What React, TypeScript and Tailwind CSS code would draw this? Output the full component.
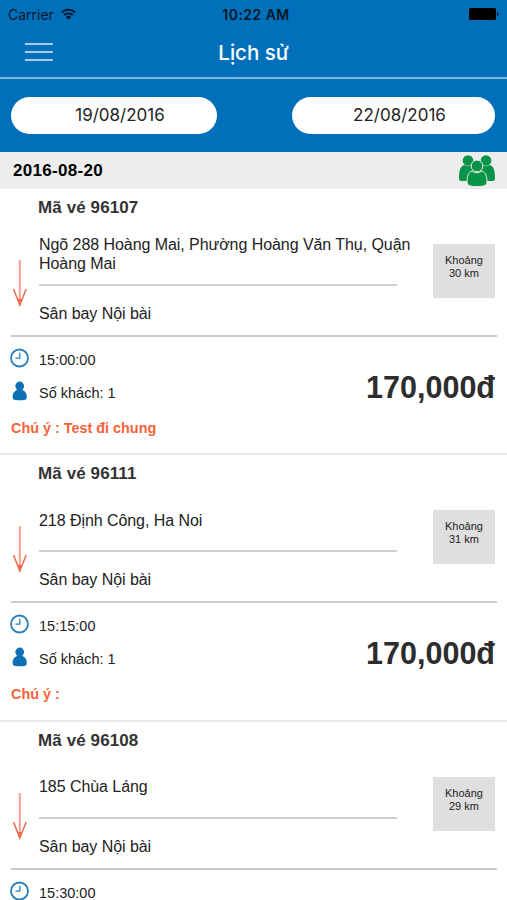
type Trip = {
  code: string;
  from: string;
  to: string;
  distance: number;
  time: string;
  guests?: number;
  price?: string;
  note?: string;
};

const trips: Trip[] = [
  {
    code: "96107",
    from: "Ngõ 288 Hoàng Mai, Phường Hoàng Văn Thụ, Quận Hoàng Mai",
    to: "Sân bay Nội bài",
    distance: 30,
    time: "15:00:00",
    guests: 1,
    price: "170,000đ",
    note: "Test đi chung",
  },
  {
    code: "96111",
    from: "218 Định Công, Ha Noi",
    to: "Sân bay Nội bài",
    distance: 31,
    time: "15:15:00",
    guests: 1,
    price: "170,000đ",
    note: "",
  },
  {
    code: "96108",
    from: "185 Chùa Láng",
    to: "Sân bay Nội bài",
    distance: 29,
    time: "15:30:00",
  },
];

const App = () => {
  return (
    <div className="flex h-[900px] w-[507px] flex-col overflow-hidden bg-white font-['Liberation_Sans',sans-serif] text-[#222]">
      <header className="h-[152px] shrink-0 bg-[#0070ba]">
        <StatusBar />
        <div className="grid h-[51px] grid-cols-[1fr_auto_1fr] items-center border-b-2 border-[#7fb7dc]">
          <button className="-mt-px ml-[25px] grid w-[28px] gap-[6px]" aria-label="Menu">
            <span className="h-[2px] bg-[#a5cde7]" />
            <span className="h-[2px] bg-[#a5cde7]" />
            <span className="h-[2px] bg-[#a5cde7]" />
          </button>
          <h1 className="font-['Inter',sans-serif] text-[20.5px] leading-6 font-medium text-white">Lịch sử</h1>
        </div>
        <div className="flex justify-between pt-[18px] pr-[12px] pl-[11px] font-['Inter',sans-serif] text-[17px]">
          <button className="h-[37px] w-[206px] rounded-full bg-white pl-[12px]">19/08/2016</button>
          <button className="h-[37px] w-[203px] rounded-full bg-white pl-[12px]">22/08/2016</button>
        </div>
      </header>
      <div className="flex h-[37px] shrink-0 items-center justify-between bg-[#ededed] pr-[12px] pl-[13px]">
        <span className="text-[17px] font-bold tracking-[0.3px] text-black">2016-08-20</span>
        <GroupIcon />
      </div>
      <main>
        {trips.map((trip) => (
          <TripCard key={trip.code} trip={trip} />
        ))}
      </main>
    </div>
  );
};

const StatusBar = () => (
  <div className="grid h-[28px] grid-cols-[1fr_auto_1fr] items-center px-[8px] font-['Inter',sans-serif] text-[14px] text-[#031625]">
    <div className="flex items-center gap-[7px]">
      <span>Carrier</span>
      <svg width="15" height="12" viewBox="0 0 15 12" fill="none" stroke="currentColor" strokeWidth="1.9">
        <path d="M.8 4.5a9.5 9.5 0 0 1 13.4 0M3.2 7.1a6.1 6.1 0 0 1 8.6 0" />
        <path d="M7.5 11.7 4.9 9a3.7 3.7 0 0 1 5.2 0z" fill="currentColor" stroke="none" />
      </svg>
    </div>
    <span className="pl-[5px] font-semibold tracking-[0.45px]">10:22 AM</span>
    <svg className="justify-self-end" width="30" height="12" viewBox="0 0 30 12" fill="#000">
      <rect width="27" height="12" rx="1.5" />
      <path d="M28 4c2 .5 2 3.5 0 4z" />
    </svg>
  </div>
);

const TripCard = ({ trip }: { trip: Trip }) => (
  <article className="flex h-[266.3px] flex-col border-b-2 border-[#e9e9e9]">
    <h2 className="h-[46px] pt-[8px] pl-[38px] text-[17px] leading-[21px] font-bold tracking-[0.1px] text-[#333]">
      Mã vé {trip.code}
    </h2>
    <div className="mr-[10px] ml-[11px] flex h-[102px] border-b-2 border-[#cacaca]">
      <div className="w-[28px] pt-[25px] pl-[1px]">
        <ArrowIcon />
      </div>
      <div className="w-[380px] text-[16px] tracking-[-0.06px]">
        <p className="flex h-[49px] items-center pb-[10px] leading-[18.5px]">{trip.from}</p>
        <hr className="w-[358px] border-t-2 border-[#cfcfcf]" />
        <p className="pt-[17px] leading-[22px]">{trip.to}</p>
      </div>
      <div className="mt-[9px] mr-[2px] ml-auto h-[54px] w-[62px] bg-[#dfdfdf] pt-[10px] text-center text-[11px] leading-[13px]">
        Khoảng
        <br />
        {trip.distance} km
      </div>
    </div>
    <div className="flex justify-between pr-[12px] pl-[10px]">
      <div className="text-[14.5px] leading-[18px]">
        <div className="flex h-[33px] items-start gap-[10px] pt-[11px]">
          <ClockIcon />
          <span className="pt-[3px]">{trip.time}</span>
        </div>
        {trip.guests && (
          <div className="flex items-start gap-[10px] pt-[11px]">
            <PersonIcon />
            <span className="pt-[3px]">Số khách: {trip.guests}</span>
          </div>
        )}
      </div>
      {trip.price && <strong className="pt-[32px] text-[30.5px] leading-[36px] text-[#2d2d2d]">{trip.price}</strong>}
    </div>
    {trip.note !== undefined && (
      <p className="pt-[14px] pl-[11px] text-[14.4px] leading-[18px] font-bold text-[#f8623a]">Chú ý : {trip.note}</p>
    )}
  </article>
);

const ArrowIcon = () => (
  <svg width="16" height="47" viewBox="0 0 16 47" fill="none">
    <path d="M7.8 0v45" stroke="#f4a493" strokeWidth="2.2" />
    <path d="m1.5 29 6.3 16L14.2 29" stroke="#ee6b4e" strokeWidth="1.5" />
    <path d="m5.8 39 2 6 2-6z" fill="#ee6b4e" />
  </svg>
);

const ClockIcon = () => (
  <svg width="19" height="20" viewBox="0 0 19 20" fill="none" stroke="#2b80bd">
    <circle cx="9.5" cy="10" r="8.5" strokeWidth="1.8" />
    <path d="M9.8 4.8v5.4H5.5" strokeWidth="1.3" />
  </svg>
);

const PersonIcon = () => (
  <svg width="19" height="20" viewBox="0 0 19 20" fill="#0e70b5">
    <circle cx="9.7" cy="5" r="4.4" />
    <path d="M6.6 8c2 1.2 4.200 1.2 6.2 0v1.200c2.700 1 4 3.200 4 6.500 0 2.300-1 3.200-2.600 3.200-3 .4-6 .4-9 0-1.600 0-2.600-.9-2.600-3.200 0-3.300 1.300-5.500 4-6.500z" />
  </svg>
);

const GroupIcon = () => (
  <svg width="36" height="32" viewBox="0 0 36 32" fill="#079447">
    <circle cx="9" cy="5.5" r="5.3" />
    <circle cx="27" cy="5.5" r="5.3" />
    <path d="M5 10c2.500 1.500 5.500 1.500 8 0 3 1 4 3 4 7v9H3c-2 0-3-.7-3-2.500C0 16.500 1 11.500 5 10zM31 10c-2.500 1.500-5.500 1.500-8 0-3 1-4 3-4 7v9h14c2 0 3-.7 3-2.500 0-7-1-12-5-13.500z" />
    <g stroke="#ededed" strokeWidth="1">
      <path d="M13 16c3 2.300 7 2.300 10 0 3.700 1.200 5 5.500 5 11 0 3.500-3 4.500-10 4.500S8 30.500 8 27C8 21.500 9.300 17.200 13 16z" />
      <circle cx="18" cy="11" r="5.900" />
    </g>
  </svg>
);

export default App;
